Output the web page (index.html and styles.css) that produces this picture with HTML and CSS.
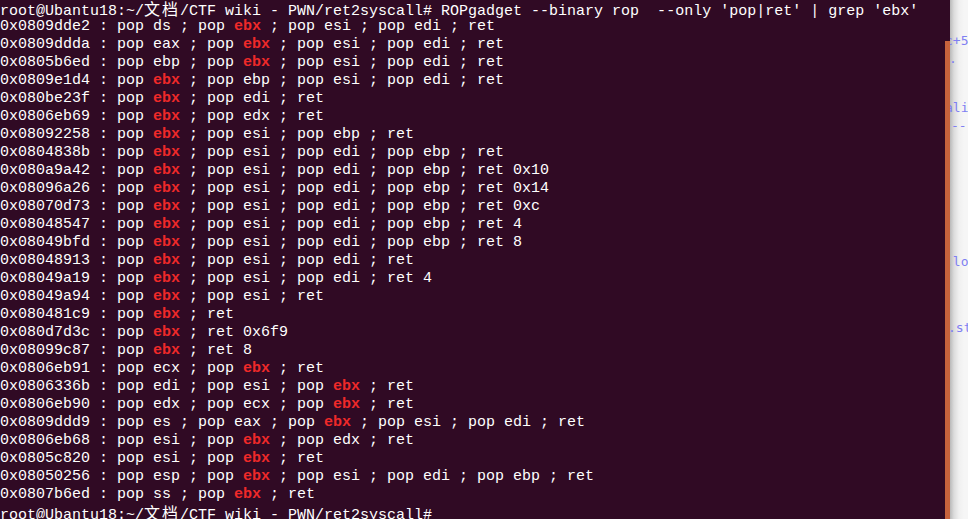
FILE: index.html
```html
<!DOCTYPE html>
<html>
<head>
<meta charset="utf-8">
<link rel="stylesheet" href="styles.css">
</head>
<body>
<div class="screen">
  <div class="terminal">
    <div class="line">root@Ubantu18:~/<span class="cjk">文档</span>/CTF wiki - PWN/ret2syscall# ROPgadget --binary rop  --only 'pop|ret' | grep 'ebx'</div>
    <div class="line">0x0809dde2 : pop ds ; pop <span class="hl">ebx</span> ; pop esi ; pop edi ; ret</div>
    <div class="line">0x0809ddda : pop eax ; pop <span class="hl">ebx</span> ; pop esi ; pop edi ; ret</div>
    <div class="line">0x0805b6ed : pop ebp ; pop <span class="hl">ebx</span> ; pop esi ; pop edi ; ret</div>
    <div class="line">0x0809e1d4 : pop <span class="hl">ebx</span> ; pop ebp ; pop esi ; pop edi ; ret</div>
    <div class="line">0x080be23f : pop <span class="hl">ebx</span> ; pop edi ; ret</div>
    <div class="line">0x0806eb69 : pop <span class="hl">ebx</span> ; pop edx ; ret</div>
    <div class="line">0x08092258 : pop <span class="hl">ebx</span> ; pop esi ; pop ebp ; ret</div>
    <div class="line">0x0804838b : pop <span class="hl">ebx</span> ; pop esi ; pop edi ; pop ebp ; ret</div>
    <div class="line">0x080a9a42 : pop <span class="hl">ebx</span> ; pop esi ; pop edi ; pop ebp ; ret 0x10</div>
    <div class="line">0x08096a26 : pop <span class="hl">ebx</span> ; pop esi ; pop edi ; pop ebp ; ret 0x14</div>
    <div class="line">0x08070d73 : pop <span class="hl">ebx</span> ; pop esi ; pop edi ; pop ebp ; ret 0xc</div>
    <div class="line">0x08048547 : pop <span class="hl">ebx</span> ; pop esi ; pop edi ; pop ebp ; ret 4</div>
    <div class="line">0x08049bfd : pop <span class="hl">ebx</span> ; pop esi ; pop edi ; pop ebp ; ret 8</div>
    <div class="line">0x08048913 : pop <span class="hl">ebx</span> ; pop esi ; pop edi ; ret</div>
    <div class="line">0x08049a19 : pop <span class="hl">ebx</span> ; pop esi ; pop edi ; ret 4</div>
    <div class="line">0x08049a94 : pop <span class="hl">ebx</span> ; pop esi ; ret</div>
    <div class="line">0x080481c9 : pop <span class="hl">ebx</span> ; ret</div>
    <div class="line">0x080d7d3c : pop <span class="hl">ebx</span> ; ret 0x6f9</div>
    <div class="line">0x08099c87 : pop <span class="hl">ebx</span> ; ret 8</div>
    <div class="line">0x0806eb91 : pop ecx ; pop <span class="hl">ebx</span> ; ret</div>
    <div class="line">0x0806336b : pop edi ; pop esi ; pop <span class="hl">ebx</span> ; ret</div>
    <div class="line">0x0806eb90 : pop edx ; pop ecx ; pop <span class="hl">ebx</span> ; ret</div>
    <div class="line">0x0809ddd9 : pop es ; pop eax ; pop <span class="hl">ebx</span> ; pop esi ; pop edi ; ret</div>
    <div class="line">0x0806eb68 : pop esi ; pop <span class="hl">ebx</span> ; pop edx ; ret</div>
    <div class="line">0x0805c820 : pop esi ; pop <span class="hl">ebx</span> ; ret</div>
    <div class="line">0x08050256 : pop esp ; pop <span class="hl">ebx</span> ; pop esi ; pop edi ; pop ebp ; ret</div>
    <div class="line">0x0807b6ed : pop ss ; pop <span class="hl">ebx</span> ; ret</div>
    <div class="line">root@Ubantu18:~/<span class="cjk">文档</span>/CTF wiki - PWN/ret2syscall# </div>
  </div>
  <div class="divider"><div class="accent"></div></div>
  <div class="sidepanel">
    <div class="code-line l1">c+5</div>
    <div class="code-line l2">.</div>
    <div class="code-line l3">ali</div>
    <div class="code-line l4">--</div>
    <div class="code-line l5">.lo</div>
    <div class="code-line l6">.st</div>
  </div>
</div>
</body>
</html>
```

FILE: styles.css
```css
html, body {
  margin: 0;
  padding: 0;
  background: #300a24;
  overflow: hidden;
}

.screen {
  display: flex;
  width: 968px;
  height: 519px;
  overflow: hidden;
}

.terminal {
  width: 945px;
  flex: none;
  background: #300a24;
  color: #ffffff;
  font-family: "Liberation Mono", "DejaVu Sans Mono", monospace;
  font-size: 15px;
  line-height: 18px;
  overflow: hidden;
}

.line {
  white-space: pre;
  height: 18px;
}

.hl {
  color: #ef2929;
  font-weight: bold;
}

.cjk {
  font-family: "Noto Sans CJK SC", sans-serif;
  font-size: 16px;
  line-height: 1;
  letter-spacing: 2px;
}

.divider {
  width: 5px;
  flex: none;
  display: flex;
  flex-direction: column;
  background: #300a24;
}

.accent {
  margin-top: 41px;
  flex: 1;
  background: #c6623c;
}

.sidepanel {
  flex: 1;
  background: linear-gradient(to right, #b9b9b9 0px, #dcdcdc 4px, #f0f0f0 9px, #f6f6f6 14px);
  overflow: hidden;
  font-family: "DejaVu Sans Mono", monospace;
  font-size: 13px;
  line-height: 22px;
  color: #7f7ff2;
  padding-top: 30px;
}

.code-line {
  white-space: pre;
  height: 22px;
  margin-left: -5px;
}

.l2 { margin-left: -1px; line-height: 14px; }
.l3 { margin-top: 23px; }
.l4 { margin-left: 1px; line-height: 14px; }
.l5 { margin-top: 110px; margin-left: -5px; }
.l6 { margin-top: 44px; margin-left: -2px; }
```
